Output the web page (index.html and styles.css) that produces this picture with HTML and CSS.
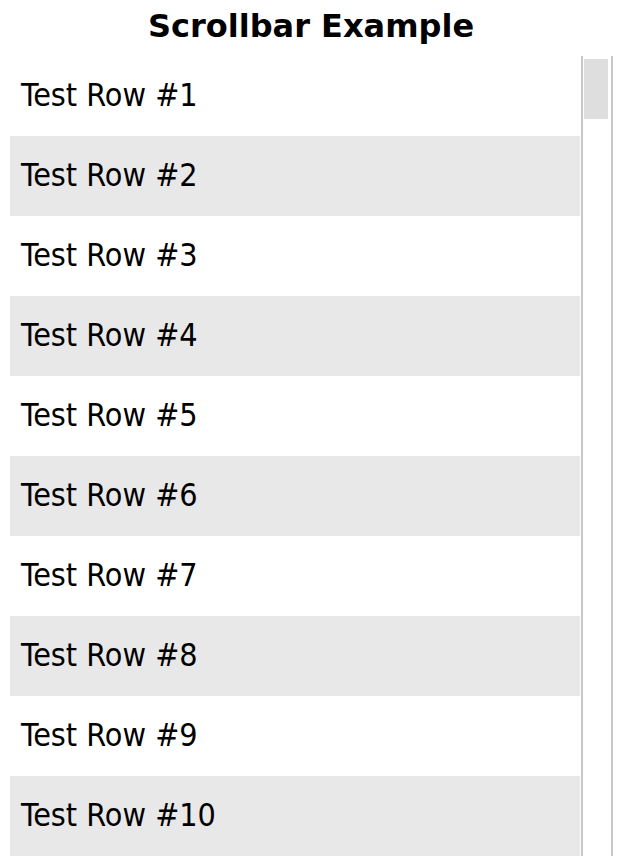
FILE: index.html
```html
<!DOCTYPE html>
<html>
<head>
<meta charset="utf-8">
<title>Scrollbar Example</title>
<link rel="stylesheet" href="styles.css">
</head>
<body>
<h1 class="title">Scrollbar Example</h1>
<div class="viewport">
  <div class="rows">
    <div class="row">Test Row #1</div>
    <div class="row alt">Test Row #2</div>
    <div class="row">Test Row #3</div>
    <div class="row alt">Test Row #4</div>
    <div class="row">Test Row #5</div>
    <div class="row alt">Test Row #6</div>
    <div class="row">Test Row #7</div>
    <div class="row alt">Test Row #8</div>
    <div class="row">Test Row #9</div>
    <div class="row alt">Test Row #10</div>
  </div>
  <div class="scrollbar">
    <div class="thumb"></div>
  </div>
</div>
</body>
</html>
```
FILE: styles.css
```css
html, body {
  margin: 0;
  padding: 0;
  background: #ffffff;
}
body {
  width: 622px;
  height: 868px;
  overflow: hidden;
  font-family: "DejaVu Sans", "Liberation Sans", sans-serif;
  color: #000000;
}
.title {
  margin: 0;
  height: 56px;
  line-height: 52px;
  text-align: center;
  font-size: 32px;
  font-weight: bold;
}
.viewport {
  display: flex;
  gap: 1px;
  margin-left: 10px;
  height: 800px;
}
.rows {
  width: 570px;
  overflow: hidden;
}
.row {
  height: 80px;
  line-height: 78px;
  padding-left: 11px;
  font-family: "DejaVu Sans Condensed", "DejaVu Sans", sans-serif;
  font-size: 32px;
  white-space: nowrap;
}
.row.alt {
  background: #e8e8e8;
}
.scrollbar {
  width: 26px;
  border-left: 2px solid #c8c8c8;
  border-right: 2px solid #c8c8c8;
  padding: 3px 1px;
  box-sizing: content-box;
}
.thumb {
  width: 24px;
  height: 60px;
  background: #dedede;
}
```
